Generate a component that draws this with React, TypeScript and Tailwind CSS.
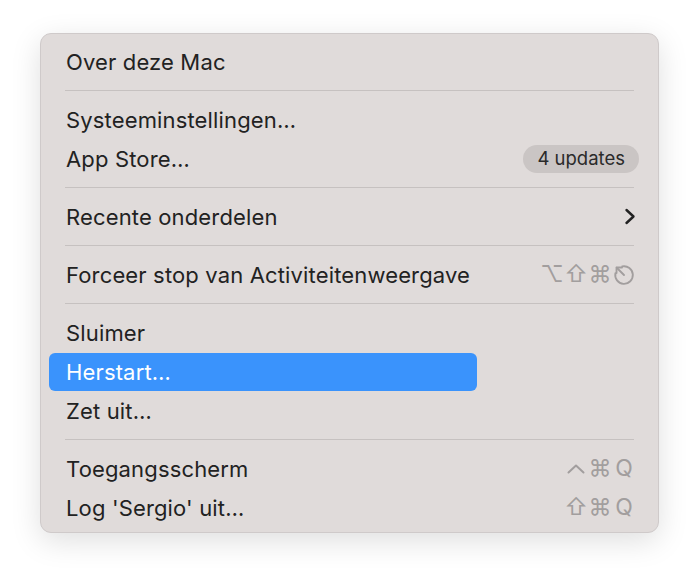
import { ReactNode } from "react";

/* ===== Glyphs ===== */
const Chevron = () => (
  <svg width="12" height="17" viewBox="0 0 12 17" fill="none" stroke="#222" strokeWidth="2.4" strokeLinecap="round" strokeLinejoin="round">
    <path d="M2.5 2l7 6.5-7 6.5" />
  </svg>
);

const EscapeIcon = () => (
  <svg width="22" height="22" viewBox="0 0 20 20" fill="none" stroke="currentColor" strokeWidth="1.7" strokeLinecap="round" strokeLinejoin="round">
    <path d="M8.4 2.2A8 8 0 1 1 2.2 8.4" />
    <path d="M10 10L3.4 3.4" />
    <path d="M3.2 3.2h5M3.2 3.2v5" />
  </svg>
);

const CaretIcon = () => (
  <svg width="18" height="10" viewBox="0 0 18 10" fill="none" stroke="currentColor" strokeWidth="2" strokeLinecap="round" strokeLinejoin="round">
    <path d="M1.5 8.5L9 1.5l7.5 7" />
  </svg>
);

function Keys({ keys }: { keys: ReactNode[] }) {
  return (
    <div className="flex items-center text-[#a29e9e] text-[23px] leading-none">
      {keys.map((k, i) => (
        <span key={i} className="w-[24px] flex justify-center items-center">
          {k}
        </span>
      ))}
    </div>
  );
}

function Item({
  label,
  right,
  active = false,
}: {
  label: string;
  right?: ReactNode;
  active?: boolean;
}) {
  return (
    <div
      className={
        active
          ? "h-[38px] my-[0.5px] w-[428px] mx-[8px] pl-[17px] flex items-center rounded-[6px] bg-[#3a93fc] text-white"
          : "h-[39px] mx-[8px] pl-[17px] pr-[14px] flex items-center justify-between text-[#222]"
      }
    >
      <span className="tracking-[0.15px] pt-[1px]">{label}</span>
      {right}
    </div>
  );
}

const Sep = () => (
  <div className="h-[19px] flex items-center px-[24px]">
    <div className="h-px w-full bg-[#c6c1c0]" />
  </div>
);

export default function App() {
  return (
    <div
      className="w-[700px] h-[582px] bg-white pt-[33px] pl-[40px]"
      style={{ fontFamily: "Inter, 'Noto Sans', sans-serif" }}
    >
      <div className="w-[619px] rounded-[11px] border border-[#cfcaca] bg-[#e0dbda] pt-[8px] pb-[5px] text-[22px] shadow-[0_8px_30px_rgba(0,0,0,0.13)]">
        <Item label="Over deze Mac" />
        <Sep />
        <Item label="Systeeminstellingen…" />
        <Item
          label="App Store…"
          right={
            <span className="-mr-[3px] h-[28px] px-[14px] flex items-center rounded-full bg-[#cac5c4] text-[18.5px] text-[#2a2a2a]">
              4 updates
            </span>
          }
        />
        <Sep />
        <Item label="Recente onderdelen" right={<Chevron />} />
        <Sep />
        <Item
          label="Forceer stop van Activiteitenweergave"
          right={<Keys keys={["⌥", "⇧", "⌘", <EscapeIcon key="esc" />]} />}
        />
        <Sep />
        <Item label="Sluimer" />
        <Item label="Herstart…" active />
        <Item label="Zet uit…" />
        <Sep />
        <Item label="Toegangsscherm" right={<Keys keys={[<CaretIcon key="c" />, "⌘", "Q"]} />} />
        <Item label="Log 'Sergio' uit…" right={<Keys keys={["⇧", "⌘", "Q"]} />} />
      </div>
    </div>
  );
}
